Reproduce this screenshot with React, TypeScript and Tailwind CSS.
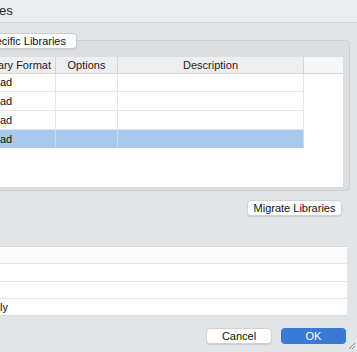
import React from "react";

const rows = ["ad", "ad", "ad", "ad"];

export default function App() {
  return (
    <div
      className="relative w-[357px] h-[352px] overflow-hidden bg-[#e2e5e7] text-[11px] text-[#111]"
      style={{ fontFamily: '"Liberation Sans", Arial, sans-serif' }}
    >
      {/* title bar */}
      <div className="h-[23px] bg-[#eaeced] border-b border-[#d3d6d8] flex items-center text-[13px] text-[#222]">
        <span className="-ml-[1px]">es</span>
      </div>

      {/* tab + panel */}
      <div className="pt-[10px]">
        <div className="relative z-10 flex w-[79px] h-[16px] -ml-[2px] justify-end items-center overflow-hidden whitespace-nowrap bg-white border border-[#c9cbcd] rounded-r-[4px] pr-[10px] shadow-[0_1px_1px_rgba(0,0,0,0.08)]">
          Specific Libraries
        </div>
        <div className="-mt-[9px] -ml-[4px] w-[354px] h-[151px] bg-[#dcdfe1] border border-[#cdd0d2] rounded-[4px] pt-[16px] pr-[6px] pb-[2px] flex flex-col">
          <div className="flex-1 bg-white border-b border-[#d4d6d8] flex flex-col">
            {/* header */}
            <div className="flex h-[17px] bg-[#edeef0] border-b border-[#d3d5d7] text-[#222]">
              <div className="w-[59px] flex justify-end items-center overflow-hidden whitespace-nowrap pr-[4px] border-r border-[#d3d5d7]">
                Library Format
              </div>
              <div className="w-[62px] flex justify-center items-center border-r border-[#d3d5d7]">
                Options
              </div>
              <div className="w-[186px] flex justify-center items-center border-r border-[#d3d5d7]">
                Description
              </div>
              <div className="flex-1 bg-[#f6f7f8]" />
            </div>
            {rows.map((t, i) => {
              const sel = i === 3;
              const h = i === 0 ? "h-[18px]" : i === 1 ? "h-[19px]" : i === 2 ? "h-[19px]" : "h-[18px]";
              return (
                <div key={i} className={`flex ${h}`}>
                  <div
                    className={`w-[307px] flex ${
                      sel ? "bg-[#a6c9ec]" : "bg-white border-b border-[#e6e7e8]"
                    }`}
                  >
                    <div
                      className={`w-[59px] flex items-center pl-[3px] border-r ${
                        sel ? "border-[#c4dbf2]" : "border-[#e6e7e8]"
                      }`}
                    >
                      {t}
                    </div>
                    <div
                      className={`w-[62px] border-r ${
                        sel ? "border-[#c4dbf2]" : "border-[#e6e7e8]"
                      }`}
                    />
                    <div
                      className={`w-[186px] border-r ${
                        sel ? "border-[#c4dbf2]" : "border-[#e6e7e8]"
                      }`}
                    />
                  </div>
                  <div className="flex-1" />
                </div>
              );
            })}
            <div className="flex-1" />
          </div>
        </div>
      </div>

      {/* migrate button */}
      <div className="flex justify-end pr-[15px] mt-[9px]">
        <div className="w-[95px] h-[16px] bg-white rounded-[4px] border border-[#d0d2d4] shadow-[0_1px_1px_rgba(0,0,0,0.1)] flex items-center justify-center">
          Migrate Libraries
        </div>
      </div>

      {/* second list */}
      <div className="mt-[30px] w-[347px] bg-white border-t border-[#d6d8da] flex flex-col">
        <div className="h-[17px] bg-[#fbfbfb] border-b border-[#e6e7e8]" />
        <div className="h-[18px] border-b border-[#e6e7e8]" />
        <div className="h-[17px] border-b border-[#e6e7e8]" />
        <div className="h-[17px] flex items-center border-b border-[#d9dbdd]">ly</div>
      </div>

      {/* bottom buttons */}
      <div className="flex justify-end gap-[9px] pr-[11px] mt-[12px]">
        <div className="w-[66px] h-[16px] bg-white rounded-[4px] border border-[#d0d2d4] shadow-[0_1px_1px_rgba(0,0,0,0.1)] flex items-center justify-center">
          Cancel
        </div>
        <div className="w-[65px] h-[16px] rounded-[4px] bg-[#3a7ad3] flex items-center justify-center text-white">
          OK
        </div>
      </div>

      {/* resize grip */}
      <svg className="absolute right-[1px] bottom-[2px]" width="8" height="8" viewBox="0 0 8 8">
        <line x1="7" y1="1" x2="1" y2="7" stroke="#8a8d90" strokeWidth="1" />
        <line x1="7" y1="4" x2="4" y2="7" stroke="#8a8d90" strokeWidth="1" />
      </svg>
    </div>
  );
}
